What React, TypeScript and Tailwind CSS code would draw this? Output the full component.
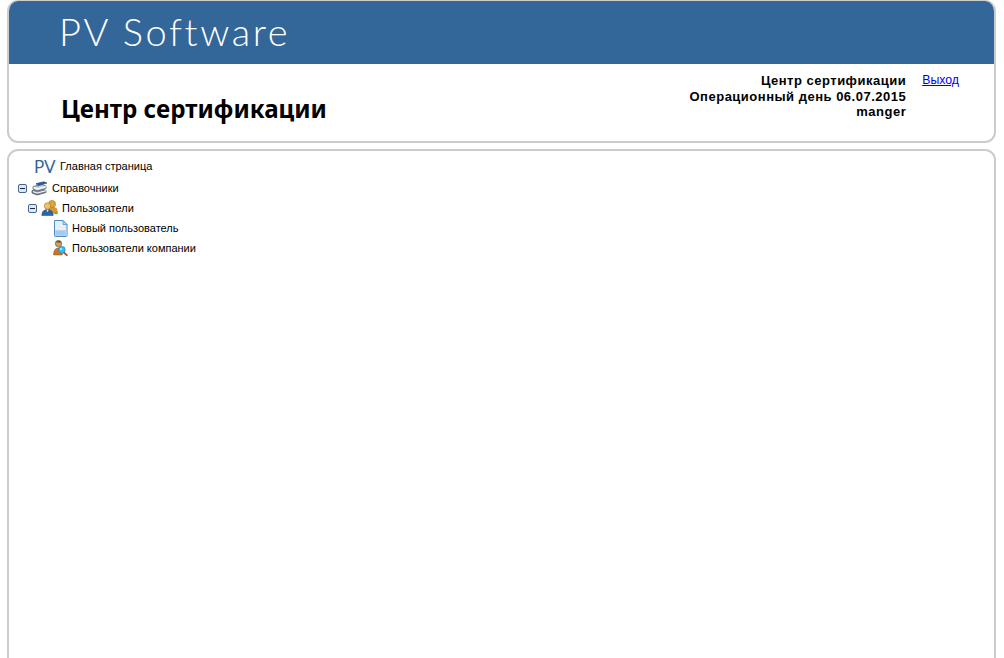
import React from "react";

function Toggle() {
  return (
    <span className="flex h-[9px] w-[9px] shrink-0 items-center justify-center rounded-[2px] border border-[#41678f] bg-[#dfe8f2]">
      <span className="h-px w-[5px] bg-[#1c2b3a]" />
    </span>
  );
}

function BooksIcon() {
  return (
    <svg width="17" height="15" viewBox="0 0 17 15" className="shrink-0">
      <path d="M1 9.5 10 8l5 1.5v2L6 14 1 12z" fill="#7f8c9c" stroke="#4c5665" strokeWidth="0.8" />
      <path d="M2 10.5 6 12l9-2.2" fill="none" stroke="#fff" strokeWidth="1" />
      <path d="M2 5.5 11 3.5l4 1.5v2.5L6 10 2 8z" fill="#c6d0dc" stroke="#56626f" strokeWidth="0.8" />
      <path d="M2.5 5.7 6.5 7.2 15 5v1.3L6.5 8.6 2.5 7z" fill="#fff" />
      <path d="M5 2.6 13 .8l3 1.3-8.5 2.3z" fill="#2b5f94" stroke="#1f4a75" strokeWidth="0.6" />
      <path d="M5 2.6 7.5 4.4v1.5L5 4.2z" fill="#5e86ae" />
    </svg>
  );
}

function UsersIcon() {
  return (
    <svg width="17" height="16" viewBox="0 0 17 16" className="shrink-0">
      <circle cx="11" cy="4" r="3.6" fill="#e0a53a" stroke="#a8741c" strokeWidth="0.6" />
      <path d="M7.5 8.5c2-1.5 6-1.5 8 0l1 4.5H8z" fill="#d9982c" stroke="#a8741c" strokeWidth="0.5" />
      <circle cx="6.5" cy="6" r="3.2" fill="#eec068" stroke="#a8741c" strokeWidth="0.6" />
      <path d="M.8 15.5c0-3.8 2-5.9 5.7-5.9s5.7 2.1 5.7 5.9z" fill="#2d66a8" stroke="#1d4576" strokeWidth="0.5" />
      <path d="m5.6 9.8 1 2.4 1-2.4z" fill="#fff" />
      <path d="M13.5 13.5h3" stroke="#4caf50" strokeWidth="1.4" />
    </svg>
  );
}

function PageIcon() {
  return (
    <svg width="15" height="17" viewBox="0 0 15 17" className="shrink-0">
      <path d="M1.5.5h8.5l4 4v11.2a.8.8 0 0 1-.8.8H2.3a.8.8 0 0 1-.8-.8z" fill="#e6f0fa" stroke="#4f8ac4" />
      <path d="M10 .5v4h4z" fill="#bcd6ee" stroke="#4f8ac4" strokeWidth="0.7" />
      <path d="M2 10h11.5v6H2z" fill="#b5d4f2" />
      <path d="M3 12h9M3 14h9" stroke="#8fbbe3" strokeWidth="0.8" />
    </svg>
  );
}

function UserSearchIcon() {
  return (
    <svg width="15" height="16" viewBox="0 0 15 16" className="shrink-0">
      <circle cx="5.5" cy="3.6" r="3.2" fill="#d99a5c" stroke="#6e4a22" strokeWidth="0.6" />
      <path d="M2.6 2c1.5-1.8 5-1.7 5.9.4L6 2.8z" fill="#4c6b2c" />
      <path d="M.6 15c0-4.3 1.6-7 4.9-7 2 0 3.2.8 3.8 2v5z" fill="#c9752a" stroke="#8a4d18" strokeWidth="0.5" />
      <path d="m10.8 12.5 3 2.6" stroke="#b04a3a" strokeWidth="1.8" strokeLinecap="round" />
      <circle cx="8.8" cy="9.8" r="3.4" fill="#3cbdea" stroke="#1f7fb0" strokeWidth="0.7" />
      <circle cx="8" cy="9" r="1" fill="#c9eefb" />
    </svg>
  );
}

export default function App() {
  return (
    <div className="h-[658px] w-[1004px] overflow-hidden bg-white font-['Liberation_Sans',sans-serif] text-black">
      <div className="mr-2 ml-[7px] h-[143px] overflow-hidden rounded-[11px] border-2 border-t border-[#cccccc]">
        <div className="flex h-[63px] items-center bg-[#336699] pb-[3px] pl-[50px]">
          <span className="font-['Lato',sans-serif] text-[38px] leading-none font-light tracking-[2.65px] text-white">PV Software</span>
        </div>
        <div className="flex">
          <h1 className="mt-[30px] ml-[52px] font-['Noto_Sans',sans-serif] text-[24.2px] leading-[30px] font-bold whitespace-nowrap">Центр сертификации</h1>
          <div className="mt-[9px] ml-auto text-right text-[13px] leading-[15.5px] font-bold tracking-[0.5px]">
            <div>Центр сертификации</div>
            <div>Операционный день 06.07.2015</div>
            <div>manger</div>
          </div>
          <a href="#" className="mt-[9px] mr-[35px] ml-[16px] text-[12.3px] leading-[15.5px] text-[#0000ee] underline">Выход</a>
        </div>
      </div>
      <div className="mr-2 ml-[7px] mt-[6px] h-[560px] rounded-[11px] border-2 border-[#cccccc] pt-[5px] text-[11px]">
        <div className="mb-[2px] flex h-5 items-center pl-[25px]">
          <span className="w-[26px] font-['Lato',sans-serif] text-[17px] leading-none font-normal text-[#336699]">PV</span>
          <span>Главная страница</span>
        </div>
        <div className="flex h-5 items-center gap-1 pl-[9px]">
          <Toggle />
          <BooksIcon />
          <span>Справочники</span>
        </div>
        <div className="flex h-5 items-center gap-1 pl-[19px]">
          <Toggle />
          <UsersIcon />
          <span>Пользователи</span>
        </div>
        <div className="flex h-5 items-center gap-1 pl-[44px]">
          <PageIcon />
          <span>Новый пользователь</span>
        </div>
        <div className="flex h-5 items-center gap-1 pl-[44px]">
          <UserSearchIcon />
          <span>Пользователи компании</span>
        </div>
      </div>
    </div>
  );
}
